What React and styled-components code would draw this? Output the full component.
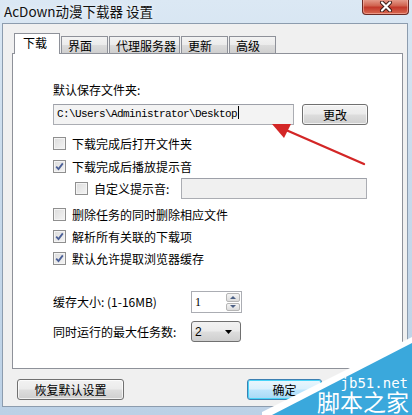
import React from "react"
import styled, {createGlobalStyle, css} from "styled-components"

const GlobalStyle = createGlobalStyle`
  html, body {
    margin: 0;
    padding: 0;
  }
  body {
    font-family: "Noto Sans CJK SC", "DejaVu Sans", sans-serif;
    font-size: 12px;
    color: #000;
  }
`

const cjk = `"Noto Sans CJK SC", "Liberation Sans", sans-serif`

const Frame = styled.div`
  position: relative;
  display: flex;
  flex-direction: column;
  width: 412px;
  height: 415px;
  overflow: hidden;
  background: linear-gradient(to bottom, #dbe8f4 0%, #c9dbec 40%, #bcd1e6 100%);
`
const TitleBar = styled.div`
  display: flex;
  justify-content: space-between;
  align-items: flex-start;
  height: 23px;
  padding-left: 4px;
  padding-right: 3px;
`
const Title = styled.div`
  font-family: ${cjk};
  font-size: 13.5px;
  line-height: 22px;
  color: #111;
  text-shadow: 0 0 6px rgba(255, 255, 255, 0.9);
`
const CloseButton = styled.div`
  display: flex;
  align-items: center;
  justify-content: center;
  width: 45px;
  height: 15px;
  margin-top: -1px;
  border: 1px solid #6b2a24;
  border-top: none;
  border-radius: 0 0 4px 4px;
  background: linear-gradient(to bottom, #e8a393 0%, #d0634f 45%, #c2382a 55%, #d86a52 100%);
  box-shadow: inset 0 0 0 1px rgba(255, 200, 190, 0.5);
`
const Body = styled.div`
  flex: 1;
  display: flex;
  flex-direction: column;
  margin: 0 4px 8px 2px;
  padding: 9px 4px 0 9px;
  background: #f0f0f0;
  border: 1px solid #8c9cae;
`
const TabStrip = styled.div`
  display: flex;
  align-items: flex-end;
  height: 20px;
  padding-left: 2px;
  position: relative;
  z-index: 1;
`
const Tab = styled.div`
  display: flex;
  align-items: center;
  justify-content: flex-start;
  box-sizing: border-box;
  width: ${({w}) => w}px;
  height: 17px;
  margin-right: 1px;
  padding-left: 6px;
  font-family: ${cjk};
  font-size: 12px;
  border: 1px solid #8e9199;
  border-bottom: none;
  background: linear-gradient(to bottom, #f3f3f3 0%, #ebebeb 50%, #dcdcdc 51%, #cfcfcf 100%);
  ${({active}) => active && css`
    height: 21px;
    margin-bottom: -1px;
    padding-bottom: 3px;
    padding-left: 8px;
    background: #fff;
  `}
`
const Panel = styled.div`
  display: flex;
  flex-direction: column;
  height: 316px;
  box-sizing: border-box;
  padding: 28px 0 0 40px;
  background: #fff;
  border: 1px solid #8e9199;
`
const Label = styled.div`
  font-family: ${cjk};
  font-size: 12px;
  line-height: 16px;
  height: 16px;
  white-space: pre;
`
const PathRow = styled.div`
  display: flex;
  align-items: center;
  margin-top: 6px;
  gap: 8px;
`
const TextBox = styled.div`
  box-sizing: border-box;
  width: ${({w}) => w}px;
  height: 21px;
  padding-left: 3px;
  font-family: "Liberation Mono", monospace;
  font-size: 11px;
  line-height: 19px;
  letter-spacing: -0.6px;
  border: 1px solid #abadb3;
  border-top-color: #9da0a8;
  background: ${({disabled}) => disabled ? "#f0f0f0" : "#f3f3f3"};
  color: #000;
`
const Caret = styled.span`
  display: inline-block;
  width: 1px;
  height: 13px;
  margin-left: 1px;
  vertical-align: -2px;
  background: #000;
`
const Button = styled.div`
  display: flex;
  align-items: center;
  justify-content: center;
  box-sizing: border-box;
  width: ${({w}) => w}px;
  height: 21px;
  font-family: ${cjk};
  font-size: 12px;
  border: 1px solid #707070;
  border-radius: 3px;
  background: linear-gradient(to bottom, #f2f2f2 0%, #ebebeb 48%, #dddddd 52%, #cfcfcf 100%);
  box-shadow: inset 0 0 0 1px rgba(255, 255, 255, 0.7);
  ${({primary}) => primary && css`
    border-color: #3c7fb1;
    background: linear-gradient(to bottom, #eaf6fd 0%, #d9f0fc 48%, #bee6fd 52%, #a7d9f5 100%);
    box-shadow: inset 0 0 0 1px #48d4f8;
  `}
`
const CheckRow = styled.label`
  display: flex;
  align-items: center;
  gap: 6px;
  height: 16px;
  margin-top: ${({mt}) => mt}px;
  margin-left: ${({indent}) => indent || 0}px;
  font-family: ${cjk};
  font-size: 12px;
`
const Box = styled.span`
  position: relative;
  display: inline-block;
  box-sizing: border-box;
  width: 13px;
  height: 13px;
  border: 1px solid #8f8f8f;
  background: linear-gradient(135deg, #dcdcdc 0%, #f4f4f4 100%);
  box-shadow: inset 0 0 0 1px #f4f4f4;
`
const CustomRow = styled.div`
  display: flex;
  align-items: center;
  justify-content: space-between;
  width: 314px;
  margin-top: 4px;
`
const FieldGrid = styled.div`
  display: grid;
  grid-template-columns: 138px auto;
  row-gap: 8px;
  align-items: center;
  margin-top: 25px;
`
const Spinner = styled.div`
  display: flex;
  justify-content: space-between;
  box-sizing: border-box;
  width: 51px;
  height: 22px;
  padding: 1px;
  border: 1px solid #abadb3;
  font-family: "Liberation Serif", serif;
  font-size: 12px;
  line-height: 18px;
  padding-left: 3px;
`
const SpinButtons = styled.div`
  display: flex;
  flex-direction: column;
  width: 14px;
  gap: 1px;
`
const SpinHalf = styled.div`
  flex: 1;
  display: flex;
  align-items: center;
  justify-content: center;
  border: 1px solid #b6b6b6;
  border-radius: 2px;
  background: linear-gradient(to bottom, #f4f4f4, #dcdcdc);
`
const Combo = styled.div`
  display: flex;
  align-items: center;
  justify-content: space-between;
  box-sizing: border-box;
  width: 50px;
  height: 21px;
  padding: 0 8px 0 3px;
  border: 1px solid #707070;
  border-radius: 3px;
  font-family: "Liberation Sans", sans-serif;
  font-size: 12px;
  background: linear-gradient(to bottom, #f2f2f2 0%, #ebebeb 48%, #dddddd 52%, #cfcfcf 100%);
`
const Footer = styled.div`
  display: flex;
  align-items: center;
  height: 20px;
  margin-top: 10px;
  margin-left: 5px;
`
const RightButtons = styled.div`
  display: flex;
  gap: 6px;
  margin-left: auto;
`
const Overlay = styled.svg`
  position: absolute;
  left: 0;
  top: 0;
  pointer-events: none;
`
const Watermark = styled.div`
  position: absolute;
  right: 0;
  bottom: 0;
  width: 150px;
  height: 80px;
`
const MarkText = styled.div`
  position: absolute;
  right: ${({r}) => r}px;
  bottom: ${({b}) => b}px;
  color: #fff;
  font-family: ${({mono}) => mono ? `"DejaVu Sans Mono", monospace` : cjk};
  font-size: ${({size}) => size}px;
  line-height: 1;
  white-space: nowrap;
`

const Check = () => (
  <svg width="9" height="9" viewBox="0 0 9 9" style={{position: "absolute", left: 1, top: 1}}>
    <path d="M1.2 4.6 L3.5 7 L7.8 1.4" fill="none" stroke="#4a5f97" strokeWidth="1.8" />
  </svg>
)

const CheckItem = ({checked, children, ...rest}) => (
  <CheckRow {...rest}>
    <Box>{checked && <Check />}</Box>
    <span>{children}</span>
  </CheckRow>
)

const tabs = [
  {label: "下载", w: 46},
  {label: "界面", w: 47},
  {label: "代理服务器", w: 71},
  {label: "更新", w: 47},
  {label: "高级", w: 47},
]

const App = () => {
  return (
    <Frame>
      <GlobalStyle />
      <TitleBar>
        <Title>AcDown动漫下载器 设置</Title>
        <CloseButton>
          <svg width="14" height="11" viewBox="0 0 14 11">
            <path d="M3 1.5 L11 9.5 M11 1.5 L3 9.5" stroke="#3a1a15" strokeWidth="4" strokeLinecap="round" />
            <path d="M3 1.5 L11 9.5 M11 1.5 L3 9.5" stroke="#fff" strokeWidth="2.2" strokeLinecap="round" />
          </svg>
        </CloseButton>
      </TitleBar>
      <Body>
        <TabStrip>
          {tabs.map((t, i) => <Tab key={t.label} w={t.w} active={i === 0}>{t.label}</Tab>)}
        </TabStrip>
        <Panel>
          <Label>默认保存文件夹:</Label>
          <PathRow>
            <TextBox w={241}>C:\Users\Administrator\Desktop<Caret /></TextBox>
            <Button w={66}>更改</Button>
          </PathRow>
          <CheckItem mt={10}>下载完成后打开文件夹</CheckItem>
          <CheckItem mt={7} checked>下载完成后播放提示音</CheckItem>
          <CustomRow>
            <CheckItem mt={0} indent={22}>自定义提示音:</CheckItem>
            <TextBox w={186} disabled />
          </CustomRow>
          <CheckItem mt={7}>删除任务的同时删除相应文件</CheckItem>
          <CheckItem mt={6} checked>解析所有关联的下载项</CheckItem>
          <CheckItem mt={6} checked>默认允许提取浏览器缓存</CheckItem>
          <FieldGrid>
            <Label>缓存大小: (1-16MB)</Label>
            <Spinner>
              <span>1</span>
              <SpinButtons>
                <SpinHalf>
                  <svg width="6" height="3" viewBox="0 0 6 3"><path d="M0 3 L3 0 L6 3Z" fill="#4d6185" /></svg>
                </SpinHalf>
                <SpinHalf>
                  <svg width="6" height="3" viewBox="0 0 6 3"><path d="M0 0 L3 3 L6 0Z" fill="#4d6185" /></svg>
                </SpinHalf>
              </SpinButtons>
            </Spinner>
            <Label>同时运行的最大任务数:</Label>
            <Combo>
              <span>2</span>
              <svg width="7" height="4" viewBox="0 0 7 4"><path d="M0 0 L7 0 L3.5 4Z" fill="#000" /></svg>
            </Combo>
          </FieldGrid>
        </Panel>
        <Footer>
          <Button w={107}>恢复默认设置</Button>
          <RightButtons>
            <Button w={75} primary>确定</Button>
            <Button w={75}>取消</Button>
          </RightButtons>
        </Footer>
      </Body>

      <Overlay width="412" height="415" viewBox="0 0 412 415">
        <path d="M364 164 L286 130" stroke="#d32626" strokeWidth="2.4" strokeLinecap="round" />
        <path d="M272 124 L291 124 L284 138 Z" fill="#d32626" />
      </Overlay>

      <Watermark>
        <svg width="150" height="80" viewBox="0 0 150 80" style={{position: "absolute", left: 0, top: 0}}>
          <path d="M-6 80 L150 2 L150 80 Z" fill="#fff" />
          <path d="M10 80 L150 8 L150 80 Z" fill="#3aa8dc" />
        </svg>
        <MarkText mono size={14} r={4} b={25}>jb51.net</MarkText>
        <MarkText size={23} r={3} b={2}>脚本之家</MarkText>
      </Watermark>
    </Frame>
  )
}

export default App
